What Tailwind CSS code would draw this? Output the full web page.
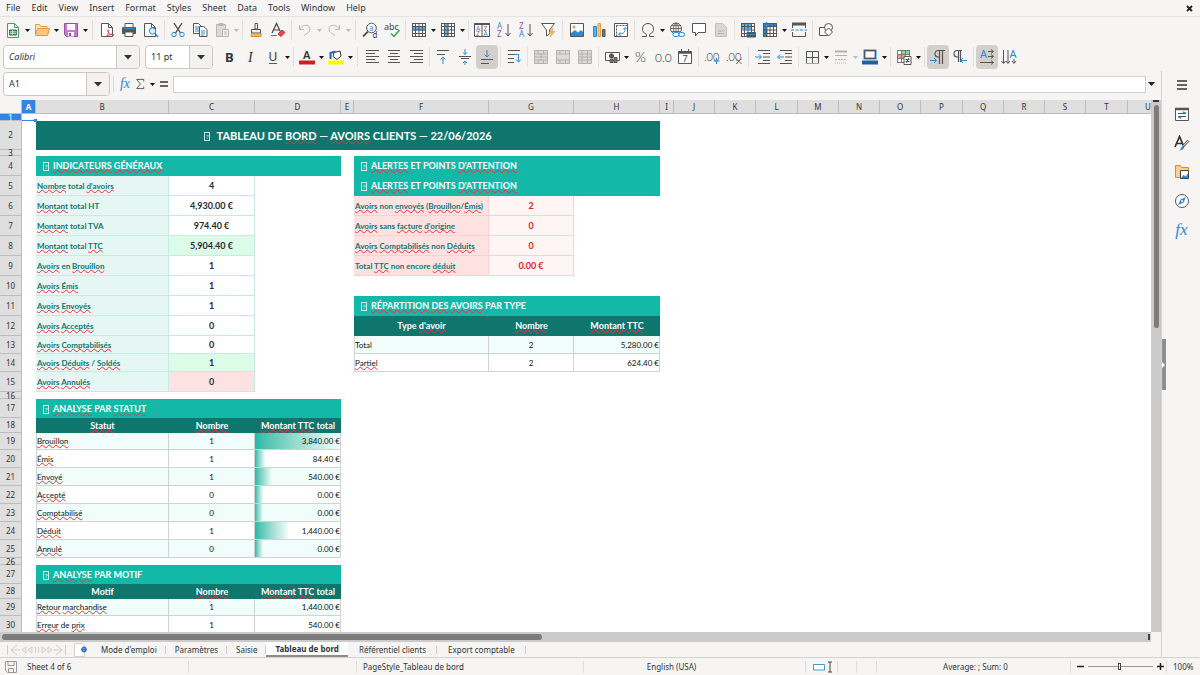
<!DOCTYPE html>
<html lang="fr">
<head>
    <meta charset="UTF-8">
    <meta name="viewport" content="width=device-width, initial-scale=1.0">
    <title>Tableau de bord - Avoirs clients</title>
    <script src="https://cdn.jsdelivr.net/npm/@tailwindcss/browser@4"></script>
</head>
<body class="h-screen flex flex-col overflow-hidden bg-[#f6f5f4] text-[#2e3436] font-['Noto_Sans',sans-serif] text-[9px] leading-3">

    <!-- Menu bar -->
    <nav class="flex items-center h-[17px] shrink-0 pl-[6px] pr-[6px] gap-[11px] border-b border-[#e6e4e2]">
        <button>File</button>
        <button>Edit</button>
        <button>View</button>
        <button>Insert</button>
        <button>Format</button>
        <button>Styles</button>
        <button>Sheet</button>
        <button>Data</button>
        <button>Tools</button>
        <button>Window</button>
        <button>Help</button>
        <button class="ml-auto" aria-label="Close document">
            <svg class="w-[9px] h-[9px]" viewBox="0 0 9 9" stroke="#222" stroke-width="1.8"><path d="M2 2l5 5M7 2l-5 5"/></svg>
        </button>
    </nav>

    <!-- Standard toolbar -->
    <div id="standardBar" class="flex items-center h-[26px] shrink-0 pl-[2px]"></div>

    <!-- Formatting toolbar -->
    <div class="flex items-center h-[28px] shrink-0 pl-[3px]">
        <div class="flex w-[137px] h-[24px] shrink-0 mr-[5px] border border-[#cdc7c2] rounded bg-white overflow-hidden">
            <input aria-label="Font name" value="Calibri" class="flex-1 min-w-0 pl-[5px] italic outline-none">
            <button aria-label="Font list" class="w-[23px] border-l border-[#cdc7c2] bg-[#f3f2f1] flex items-center justify-center">
                <svg class="w-[8px] h-[5px]" viewBox="0 0 8 5"><path d="M0 0h8l-4 4.500z" fill="#2e3436"/></svg>
            </button>
        </div>
        <div class="flex w-[68px] h-[24px] shrink-0 border border-[#cdc7c2] rounded bg-white overflow-hidden">
            <input aria-label="Font size" value="11 pt" class="flex-1 min-w-0 pl-[5px] outline-none">
            <button aria-label="Size list" class="w-[23px] border-l border-[#cdc7c2] bg-[#f3f2f1] flex items-center justify-center">
                <svg class="w-[8px] h-[5px]" viewBox="0 0 8 5"><path d="M0 0h8l-4 4.500z" fill="#2e3436"/></svg>
            </button>
        </div>
        <div id="formatBar" class="flex items-center pl-[5px]"></div>
    </div>

    <div class="flex flex-1 min-h-0">
        <main class="flex flex-col flex-1 min-w-0">
            <!-- Formula bar -->
            <div class="flex items-center h-[26px] shrink-0 mb-[3px] pl-[3px]">
                <div class="flex w-[107px] h-[24px] shrink-0 border border-[#cdc7c2] rounded bg-white overflow-hidden">
                    <input aria-label="Name box" value="A1" class="flex-1 min-w-0 pl-[5px] outline-none">
                    <button aria-label="Named ranges" class="w-[23px] border-l border-[#cdc7c2] bg-[#f3f2f1] flex items-center justify-center">
                        <svg class="w-[8px] h-[5px]" viewBox="0 0 8 5"><path d="M0 0h8l-4 4.500z" fill="#2e3436"/></svg>
                    </button>
                </div>
                <div class="w-px h-4 mx-[3px] bg-[#dcdad8]"></div>
                <button aria-label="Function wizard" class="w-[16px] text-[14px] leading-4 italic text-[#2a8ad4] font-['Liberation_Serif',serif]">fx</button>
                <button aria-label="Select function" class="flex items-center pl-[2px]">
                    <svg class="w-[10px] h-[14px]" viewBox="0 0 12 14" fill="none" stroke="#444"><path d="M10.500 4V1.500H2L6.500 7L2 12.500h8.500V10"/></svg>
                    <svg class="w-[5px] h-[3px] ml-[5px]" viewBox="0 0 5 3"><path d="M0 0h5L2.500 3z" fill="#111"/></svg>
                </button>
                <button aria-label="Formula" class="w-[18px] flex justify-center">
                    <svg class="w-[8px] h-[6px]" viewBox="0 0 8 6" stroke="#333" stroke-width="1.400"><path d="M0 1h8M0 5h8"/></svg>
                </button>
                <input aria-label="Input line" class="flex-1 min-w-0 h-[17px] border border-[#d0d0d0] bg-white outline-none">
                <button aria-label="Expand formula bar" class="w-[15px] flex justify-center">
                    <svg class="w-[7px] h-[4px] mr-[4px]" viewBox="0 0 7 4"><path d="M0 0h7L3.500 4z" fill="#222"/></svg>
                </button>
            </div>

            <!-- Sheet -->
            <div class="flex flex-1 min-h-0">
                <div class="relative flex-1 min-w-0 overflow-hidden bg-white">
                    <table class="table-fixed border-separate border-spacing-0 w-[1168px]">
                        <colgroup id="cols"></colgroup>
                        <thead><tr id="colHeads"></tr></thead>
                        <tbody id="sheet" class="font-[Lato,sans-serif]"></tbody>
                    </table>
                    <!-- Cell cursor on A1 -->
                    <div class="absolute left-[22px] top-[14px] w-[14px] h-[7px] border-b border-[#3584e4]"></div>
                    <div class="absolute left-[34px] top-[19px] w-[3px] h-[3px] bg-[#3584e4]"></div>
                </div>
                <div class="w-[10px] shrink-0 bg-[#cbcbcb] flex flex-col items-center">
                    <div class="w-[6px] h-[2px] mb-[3px] bg-[#333]"></div>
                    <div class="w-[5px] h-[42%] rounded-full bg-[#7c7c7c]"></div>
                </div>
            </div>
            <div class="flex h-[10px] shrink-0 mr-[10px] pl-[2px] items-center bg-[#cbcbcb]">
                <div class="w-[47%] h-[6px] rounded-full bg-[#7c7c7c]"></div>
                <div class="ml-auto mr-px w-[2px] h-[6px] bg-[#444]"></div>
            </div>

            <!-- Sheet tabs -->
            <div class="flex items-stretch h-[15px] shrink-0 text-[8px]">
                <div class="flex items-center w-[92px] pl-[6px] gap-[7px]">
                    <svg class="w-[61px] h-[12px]" viewBox="0 0 61 12" fill="none" stroke="#cfcdcb"><path d="M1.500 1v10M11 1L5 6l6 5M5 6h9M20 3l-4 3 4 3zM26 3l-4 3 4 3zM29.500 3v6M32.500 3v6M36 3l4 3-4 3zM42 3l4 3-4 3zM50 1l6 5-6 5M56 6h-9M59.500 1v10"/></svg>
                    <button aria-label="Add sheet">
                        <svg class="w-[13px] h-[14px]" viewBox="0 0 13 14"><path d="M.5 .5h8l2 2v11H.5z" fill="#fff" stroke="#d5d3d1"/><circle cx="10" cy="6.500" r="2" fill="#fff" stroke="#2a62c4" stroke-width="1.300"/><path d="M10 3.500v6M7 6.500h6" stroke="#2a62c4" stroke-width=".8"/></svg>
                    </button>
                </div>
                <button class="px-[9px] relative after:absolute after:right-0 after:top-1 after:h-2 after:w-px after:bg-[#cfcdcb]">Mode d'emploi</button>
                <button class="px-[9px] relative after:absolute after:right-0 after:top-1 after:h-2 after:w-px after:bg-[#cfcdcb]">Paramètres</button>
                <button class="px-[9px] relative after:absolute after:right-0 after:top-1 after:h-2 after:w-px after:bg-[#cfcdcb]">Saisie</button>
                <button class="px-[9px] bg-white font-bold border-b-2 border-[#8c8c8c]">Tableau de bord</button>
                <button class="px-[11px] relative after:absolute after:right-0 after:top-1 after:h-2 after:w-px after:bg-[#cfcdcb]">Référentiel clients</button>
                <button class="px-[11px] relative after:absolute after:right-0 after:top-1 after:h-2 after:w-px after:bg-[#cfcdcb]">Export comptable</button>
            </div>
        </main>

        <!-- Sidebar -->
        <aside class="w-[39px] shrink-0 border-l border-[#d5d3d1] flex">
            <button aria-label="Hide sidebar" class="w-[4px] h-[51px] mt-[268px] bg-[#8f8f8f] flex items-center">
                <svg class="w-[3px] h-[6px]" viewBox="0 0 3 6"><path d="M0 0l3 3-3 3z" fill="#fff"/></svg>
            </button>
            <div class="flex flex-col items-center flex-1 pt-[6px] pr-[3px] gap-[13px]">
                <button aria-label="Sidebar settings"><svg class="w-4 h-4" viewBox="0 0 16 16" stroke="#333" stroke-width="1.500"><path d="M3 4h10M3 8h10M3 12h10"/></svg></button>
                <button aria-label="Properties"><svg class="w-4 h-4" viewBox="0 0 16 16" fill="none"><path d="M1.500 2.500h13v12h-13z" fill="#fff" stroke="#555"/><path d="M1 3h14" stroke="#555" stroke-width="2.500"/><path d="M4 7.500h8M4 10.500h8" stroke="#555"/><path d="M9 6l3 1.500M7 12l-3-1.500" stroke="#2a8ad4" stroke-width="1.500"/></svg></button>
                <button aria-label="Styles"><svg class="w-4 h-4" viewBox="0 0 16 16" fill="none"><path d="M1 12L5.500 1.500 10 12M2.500 8.500h6" stroke="#333" stroke-width="1.700"/><path d="M14.500 5.500L9.500 11" stroke="#555" stroke-width="2.500"/><path d="M14.500 5.500L9.500 11" stroke="#fff"/><path d="M5 15.500c2 0 1.500-4 4-4.500 2 .5 1.500 4-4 4.500z" fill="#2a8ad4"/></svg></button>
                <button aria-label="Gallery"><svg class="w-4 h-4" viewBox="0 0 16 16" fill="none"><path d="M1.500 13.500v-12h5l1 2h7v10z" fill="#fbd08c" stroke="#e08a2c"/><path d="M6.500 6.500h8v8h-8z" fill="#fff" stroke="#444"/><path d="M7 14l2.500-3 2 1.500 2.500-3V14z" fill="#2a8ad4"/></svg></button>
                <button aria-label="Navigator"><svg class="w-4 h-4" viewBox="0 0 16 16" fill="none"><circle cx="8" cy="8" r="6.500" fill="#fff" stroke="#555"/><path d="M12 4L9.500 9.500 4 12l2.500-5.500z" fill="#2a8ad4"/><circle cx="8" cy="8" r="1" fill="#fff"/></svg></button>
                <button aria-label="Functions" class="h-4 text-[17px] leading-4 italic text-[#2a8ad4] font-['Liberation_Serif',serif]">fx</button>
            </div>
        </aside>
    </div>

    <!-- Status bar -->
    <footer class="grid grid-cols-[189fr_168fr_227fr_222fr_32px_19px_20px_194fr_96px_33px] items-center h-[18px] shrink-0 border-t border-[#d5d3d1] text-[8px] [&>*]:h-3 [&>*]:border-[#e0dedc]">
        <div class="flex items-center pl-[5px] gap-[10px] border-r">
            <svg class="w-3 h-3" viewBox="0 0 12 12" fill="none" stroke="#999"><path d="M.5 .5h11v11h-9l-2-2zM3 .5v4h6v-4M3.500 11.500v-4h5v4"/></svg>
            <span>Sheet 4 of 6</span>
        </div>
        <div class="border-r"></div>
        <div class="pl-[6px] border-r">PageStyle_Tableau de bord</div>
        <div class="pr-[46px] text-center border-r">English (USA)</div>
        <div class="flex items-center justify-center gap-[2px] border-r">
            <svg class="w-[19px] h-3 ml-[2px]" viewBox="0 0 19 12" fill="none"><path d="M.5 3.500h11v5.500H.5z" fill="#fff" stroke="#4a98cf"/><path d="M15 1h4M15 11h4M17 1v10" stroke="#444"/></svg>
        </div>
        <div class="border-r"></div>
        <div class="border-r"></div>
        <div class="pl-[4px] text-center border-r">Average: ; Sum: 0</div>
        <div class="flex items-center pl-[6px] gap-[4px] border-r">
            <button aria-label="Zoom out"><svg class="w-[7px] h-[7px]" viewBox="0 0 7 7" stroke="#222" stroke-width="1.500"><path d="M0 3.500h7"/></svg></button>
            <input type="range" aria-label="Zoom" min="0" max="100" value="49" class="appearance-none w-[65px] h-px bg-[#999] [&::-webkit-slider-thumb]:appearance-none [&::-webkit-slider-thumb]:w-[3px] [&::-webkit-slider-thumb]:h-[7px] [&::-webkit-slider-thumb]:border [&::-webkit-slider-thumb]:border-[#444] [&::-webkit-slider-thumb]:bg-white">
            <button aria-label="Zoom in"><svg class="w-[7px] h-[7px]" viewBox="0 0 7 7" stroke="#222" stroke-width="1.500"><path d="M0 3.500h7M3.500 0v7"/></svg></button>
        </div>
        <div class="pl-[6px]">100%</div>
    </footer>

    <script>
        // Icons are drawn on a 16x16 grid
        const B = '#2a8ad4';
        const text = (x, y, size, fill, s, extra = '') => `<text x="${x}" y="${y}" font-size="${size}" fill="${fill}" stroke="none" ${extra}>${s}</text>`;
        const light = 'font-family="Lato,DejaVu Sans,sans-serif" font-weight="300"';
        const tableGrid = '<path d="M1.500 1.500h13v13h-13z" fill="#fff"/>';
        const gridLines = '<path d="M1.500 1.500h13v13h-13zM1.500 4.500h13M1.500 8h13M1.500 11.500h13M4.500 1.500v13M8 1.500v13M11.500 1.500v13"/>';
        const mergeIcon = extra => `<g stroke="#b5b3b1"><path d="M1.500 1.500h13v13h-13z" fill="#dddbd9"/><path d="M1.500 5h13M1.500 11h13M5 1.500V5M10.500 1.500V5M5 11v3.500M10.500 11v3.500"/>${extra}</g>`;

        const icons = {
            new: '<path d="M2.500 1.500h7l4 4v10h-11z" fill="#fff" stroke="#3da35d"/><path d="M9.500 1.500v4h4" stroke="#3da35d"/><path d="M4.500 8h7v5h-7z" fill="#3da35d"/><path d="M4.500 9.800h7M4.500 11.500h7M7.500 8v5" stroke="#fff" stroke-width=".6"/>',
            open: '<path d="M1.500 13V2.500h4l1.500 2h6v3" fill="#fde3bb" stroke="#e59b3c"/><path d="M1.500 13.500l2-7h12l-2 7z" fill="#fbc97e" stroke="#e59b3c"/>',
            save: '<path d="M1.500 1.500h13v13h-11l-2-2z" fill="#c778cf" stroke="#9f4ba9"/><path d="M4 2h8v6H4zM5 10h6v4.500H5z" fill="#fff" stroke="none"/><path d="M6 11h2v3H6z" fill="#9f4ba9" stroke="none"/>',
            pdf: '<path d="M2.500 1.500h7l4 4v9h-11z" fill="#fff"/><path d="M9.500 1.500v4h4"/><path d="M7 15c3-3 3-8 2-7s1 5 6 5c-2-1.500-5-.5-8 2" stroke="#dc3b4b"/>',
            print: '<path d="M4 5V1.500h8V5" fill="#fff"/><path d="M1.500 5.500h13v6h-13z" fill="#555"/><path d="M2 6.500h12" stroke="#2a8ad4" stroke-width="1.500"/><path d="M4 10h8v4.500H4z" fill="#fff"/>',
            preview: '<path d="M1.500 1.500h7l4 4v9h-11z" fill="#fff"/><path d="M8.500 1.500v4h4"/><circle cx="9.500" cy="9" r="3.200" fill="#d9ecf9" stroke="#2a8ad4"/><path d="M12 11.500l3 3.500" stroke="#2a8ad4" stroke-width="1.500"/>',
            cut: '<path d="M4 1l6.500 10M12 1L5.500 11" stroke="#444" stroke-width="1.300"/><circle cx="4" cy="12.500" r="2.200" stroke="#2a8ad4"/><circle cx="12" cy="12.500" r="2.200" stroke="#2a8ad4"/>',
            copy: '<path d="M1.500 1.500h5l3 3v7h-8z" fill="#fff"/><path d="M3 5h4M3 7h4M3 9h4" stroke="#2a8ad4"/><path d="M7.500 4.500h4l3.500 3v7H7.500z" fill="#fff"/><path d="M9 9h4M9 11h4M9 13h3" stroke="#2a8ad4"/>',
            paste: '<g stroke="#b8b6b4"><path d="M2.500 2.500h9v12h-9z" fill="#dcdad8"/><path d="M5 1.500h4v2H5z" fill="#b8b6b4"/><path d="M8.500 7.500h6v7h-6z" fill="#f2f2f2"/><path d="M10 10h3M10 12h3"/></g>',
            clone: '<path d="M7 1.500h2.500V7H7z" fill="#fff"/><path d="M3.500 7.500h9V11h-9z" fill="#eee"/><path d="M3.500 11.500h9.500v3H3z" fill="#f9b95c" stroke="#e08a2c"/>',
            clear: '<path d="M2 11L6.500 1.500 11 11M4 8h5" stroke="#444" stroke-width="1.200"/><path d="M1 13.500h6" stroke="#2a8ad4"/><path d="M8 12l4-4 3 2.500-4 4z" fill="#e0485a" stroke="#c33"/>',
            undo: '<path d="M2.500 3v4.500H7M2.500 7.500C5 2 13 2 13 7c0 3-3 4.500-6 6.500" stroke="#bbb9b7"/>',
            redo: '<path d="M13.500 3v4.500H9M13.500 7.500C11 2 3 2 3 7c0 3 3 4.500 6 6.500" stroke="#bbb9b7"/>',
            find: '<circle cx="9.500" cy="6" r="4.800" fill="#fff"/><path d="M6 9.500L1 14.500" stroke-width="1.800"/>' + text(7, 8.5, 8, B, 'a') + text(10.5, 15.5, 8, '#444', 'd'),
            spell: text(0, 7.5, 9, '#444', 'abc') + '<path d="M7 11.500l3 3L15.500 8" stroke="#2fa85a" stroke-width="1.500"/>',
            row: tableGrid + '<path d="M1 4.500h14v4H1z" fill="#5fb0ea" stroke="none"/>' + gridLines,
            column: tableGrid + '<path d="M4.500 1h4v14h-4z" fill="#5fb0ea" stroke="none"/>' + gridLines,
            sort: '<path d="M.5 1.500h15v13H.5zM8 2v12" fill="#fff"/><path d="M.5 2h15" stroke-width="2"/>' + text(2, 8.5, 6.5, B, 'A') + text(2, 14, 6.5, '#a347ba', 'Z') + text(9.5, 8.5, 6.5, '#a347ba', 'Z') + text(9.5, 14, 6.5, B, 'A'),
            az: text(1, 7, 8, B, 'A') + text(1, 15, 8, '#a347ba', 'Z') + '<path d="M12 2v12M9.500 11l2.500 3 2.500-3"/>',
            za: text(1, 7, 8, '#a347ba', 'Z') + text(1, 15, 8, B, 'A') + '<path d="M12 2v12M9.500 11l2.500 3 2.500-3"/>',
            filter: '<path d="M1.500 1.500h13L9.500 8v4l-3 2V8z" fill="#fff"/><path d="M13 6l-4 5h3l-2 4 5-5.500h-3z" fill="#f9b95c" stroke="#e59b3c" stroke-width=".6"/>',
            image: '<path d="M1.500 1.500h13v13h-13z" fill="#fff"/><path d="M2 14v-3l4-3 3 2.500L12 8l2 2v4z" fill="#2a8ad4" stroke="none"/><circle cx="5" cy="5" r="1.600" fill="#f9a03c" stroke="none"/>',
            chart: '<path d="M2.500 4.500h3v10h-3z" fill="#5fb0ea" stroke="#2a8ad4"/><path d="M7 1.500h2.500v13H7z" fill="#fbc97e" stroke="#e59b3c"/><path d="M11.500 7.500h2.500v7h-2.500z" fill="#777"/>',
            pivot: '<path d="M1.500 1.500h13v13h-13z" fill="#fff"/><path d="M3.500 3.500h11M3.500 3.500v11" stroke-dasharray="2 1"/><path d="M6 12c5 0 6-2 6-6M10 7.500L12 5.500l2 2M7.500 10.500L5.500 12l2 2" stroke="#2a8ad4"/>',
            omega: '<path d="M2 14.500h4.500v-2C3.500 11 2.500 9 2.500 7c0-3.500 2.500-5.500 5.500-5.500s5.500 2 5.500 5.500c0 2-1 4-4 5.500v2H14"/>',
            link: '<circle cx="7" cy="6.500" r="5.500"/><path d="M1.500 6.500h11M7 1v11M3 3.500h8M3 9.500h8M7 1c-3.500 3-3.500 8 0 11M7 1c3.500 3 3.500 8 0 11" stroke-width=".8"/><rect x="4" y="10.500" width="6" height="4" rx="2" fill="#fff" stroke="#2a8ad4"/><rect x="9.500" y="10.500" width="6" height="4" rx="2" stroke="#2a8ad4"/>',
            comment: '<path d="M1.500 1.500h13v9H7l-2.500 3.500V10.500h-3z" fill="#fff"/>',
            header: '<path d="M2.500 1.500h7l4 4v9h-11z" fill="#dad8d6" stroke="#c2c0be"/><path d="M5 9h6M5 11.500h6" stroke="#b5b3b1"/>',
            printArea: tableGrid + '<path d="M1.500 1.500h10v6h-10z" fill="#5fb0ea" stroke="none"/>' + gridLines + '<path d="M7 10.500h8.500V15H7z" fill="#555"/><path d="M7 12.500h8" stroke="#2a8ad4"/>',
            freeze: tableGrid + '<path d="M1.500 1.500h13v3h-9v10h-4z" fill="#2a8ad4" stroke="none"/>' + gridLines + '<path d="M4.500 0v6" stroke="#2a8ad4" stroke-width="1.500"/>',
            split: '<path d="M1.500 2v4M14.500 2v4M1.500 10v4.500h13V10"/><path d="M1 2h14" stroke-width="3"/><path d="M0 8h16" stroke="#2a8ad4" stroke-dasharray="3 1.500"/>',
            shapes: '<path d="M1.500 5.500h8v8h-8z" fill="#fff"/><circle cx="10.500" cy="5.500" r="4" fill="#f6f5f4"/><path d="M10.500 6l4 4-4 4-4-4z" fill="#fff"/>',
            bold: text(4, 13, 13, '#333', 'B', 'font-weight="700"'),
            italic: text(5, 13, 14, '#333', 'I', 'font-style="italic" font-family="Liberation Serif"'),
            underline: text(3.5, 12, 12, '#333', 'U') + '<path d="M4 14.500h8" stroke="#2a62c4"/>',
            color: text(4, 10, 11, '#333', 'A', 'font-weight="600"') + '<path d="M0 13.500h16" stroke="#c9211e" stroke-width="4"/>',
            highlight: '<path d="M6 3.500l6-1.500 1 5-4 3.500-4-3z" fill="#fff" stroke="#333"/><path d="M2.500 10V4l5-1.500" stroke="#2a62a4" stroke-width="2"/><path d="M0 13.500h16" stroke="#ff0" stroke-width="4"/>',
            left: '<path d="M2 1.500h13M2 4.500h9M2 7.500h13M2 10.500h9M2 13.500h13"/>',
            center: '<path d="M2 1.500h12M4 4.500h8M2 7.500h12M4 10.500h8M2 13.500h12"/>',
            right: '<path d="M2 1.500h13M6 4.500h9M2 7.500h13M6 10.500h9M2 13.500h13"/>',
            top: '<path d="M2 1.500h12M2 5.500h8"/><path d="M8 15V8M5.500 10.500L8 8l2.500 2.500" stroke="#2a8ad4"/>',
            middle: '<path d="M2 7.500h12M4 9.500h8"/><path d="M8 0v5.500M6 3.500l2 2 2-2M8 16v-4M6 14l2-2 2 2" stroke="#2a8ad4"/>',
            bottom: '<path d="M2 10.500h12M2 14.500h8"/><path d="M8 1v7M5.500 5.500L8 8l2.500-2.500" stroke="#2a8ad4"/>',
            wrap: '<path d="M2 1.500h12M2 5.500h6M2 9.500h6M2 13.500h6"/><path d="M8 5.500h4.500v7M10 10.500l2.500 2.500 2.500-2.500" stroke="#2a8ad4"/>',
            merge: mergeIcon('<path d="M8 5v6M1.500 8h13"/>'),
            mergeCells: mergeIcon(''),
            unmerge: mergeIcon('<path d="M5 5v6M10.500 5v6M1.500 8h13"/>'),
            currency: '<path d="M1.500 3.500h14v8h-14z" fill="#fff"/><circle cx="7.500" cy="7" r="2.200" fill="#555"/><path d="M6 13.500h3v-3H6zM10 13.500h3v-5h-3z" fill="#777"/>',
            percent: text(2, 13, 14, '#333', '%', light),
            number: text(0, 12.500, 12, '#333', '0.0', light),
            date: '<path d="M1.500 2.500h13v12h-13z" fill="#fff"/><path d="M1.500 3.500h13" stroke-width="2.500"/><path d="M4.500 0v3M11.500 0v3"/>' + text(5.5, 13, 9, '#444', '7'),
            addDecimal: text(0, 11.500, 11, '#333', '.00', light) + '<path d="M12.500 9v6M9.500 12h6" stroke="#2a8ad4"/>',
            delDecimal: text(0, 11.500, 11, '#333', '.00', light) + '<path d="M10 9.500l5.500 5.500M15.500 9.500L10 15" stroke="#e0343c"/>',
            indent: '<path d="M3 1.500h12M8 4.500h7M8 8h7M8 11.500h7M3 14.500h12"/><path d="M0 8h6M4 5.500L6.500 8 4 10.500" stroke="#2a8ad4"/>',
            outdent: '<path d="M3 1.500h12M8 4.500h7M8 8h7M8 11.500h7M3 14.500h12"/><path d="M1 8h6M3 5.500L.5 8 3 10.500" stroke="#2a8ad4"/>',
            borders: '<path d="M2.500 14.500v-12h12v12M8.500 2.500v12M2.500 8.500h12" fill="none"/><path d="M2 14.500h13" stroke="#e59b3c"/>',
            lineStyle: '<g stroke="#b5b3b1"><path d="M2 2.500h12" stroke-width="2"/><path d="M2 6.500h12"/><path d="M2 10.500h12" stroke-dasharray="2 1"/><path d="M2 14h12" stroke-dasharray="1 1"/></g>',
            borderColor: '<path d="M2.500 1.500h11v8h-11z" fill="#fff" stroke="#2a8ad4" stroke-width="2"/><path d="M2.500 1.500h11v8h-11z"/><path d="M0 13.500h16" stroke="#1e5fa8" stroke-width="4"/>',
            conditional: '<path d="M1.500 1.500h12v12h-12z" fill="#fff"/><path d="M5 1.500h8v4H5z" fill="#8ad79a" stroke="none"/><path d="M1.500 5.500h8v4h-8z" fill="#f29a9a" stroke="none"/><path d="M1.500 1.500h12v12h-12zM1.500 5.500h12M1.500 9.500h12M5.500 1.500v12M9.500 1.500v12" stroke="#777"/><path d="M8 7.500h7v8H8z" fill="#fff"/><path d="M9.500 10.500h4M9.500 12.500h4M12.500 9l-2 5"/>',
            ltrPara: '<path d="M9.500 15V1.500M12.500 15V1.500M15 1.500H8C4 1.500 4 8 8 8h1" stroke-width="1.200"/><path d="M0 11.500h6M4 9l2.500 2.500L4 14" stroke="#2a8ad4"/>',
            rtlPara: '<path d="M6.500 13V1.500M8.500 13V1.500M10 1.500H5C1 1.500 1 8 5 8h1" stroke-width="1.200"/><path d="M9 11.500h6M11 9l-2.500 2.500L11 14" stroke="#2a8ad4"/>',
            ltr: text(1, 9, 11, B, 'A') + '<path d="M9 2.500h5M12 .5l2.500 2-2.500 2M9 7.500h5M12 5.500l2.500 2-2.500 2M1 13.500h13M12 11.500l2.500 2-2.500 2"/>',
            ttb: text(8.5, 9, 11, B, 'A') + '<path d="M2.500 1v13M.5 12l2 2.500 2-2.500M7 1v13M5 12l2 2.500L9 12M13 10v4M11 12l2 2.500 2-2.500"/>'
        };

        // "v" = drop-down arrow, "vd" = disabled arrow, "|" and "||" = separators, trailing "*" = pressed
        const standard = 'new v open v save v || pdf print preview | cut copy paste vd | clone clear | undo vd redo vd || find spell | row v column v | sort az za filter || image chart pivot | omega v link comment header | printArea freeze v split | shapes';
        const format = 'bold italic underline v | color v highlight v || left center right | top middle bottom* | wrap | merge mergeCells unmerge | currency v percent number date | addDecimal delDecimal || indent outdent | borders v lineStyle vd borderColor v | conditional v | ltrPara* rtlPara | ltr* ttb';

        function renderBar(id, list) {
            document.getElementById(id).innerHTML = list.split(' ').map(key => {
                if (key === '|') return '<div class="w-[5px] h-5 flex justify-center"><div class="w-px bg-[#e2e0de]"></div></div>';
                if (key === '||') return '<div class="w-[7px] h-5 flex justify-center"><div class="w-px bg-[#e2e0de]"></div></div>';
                if (key[0] === 'v') {
                    return `<button aria-label="More" class="w-[7px] flex justify-center"><svg class="w-[5px] h-[3px]" viewBox="0 0 5 3"><path d="M0 0h5L2.500 3z" fill="${key === 'vd' ? '#bbb' : '#111'}"/></svg></button>`;
                }
                const pressed = key.endsWith('*');
                const name = key.replace('*', '');
                return `<button aria-label="${name}" class="w-[22px] h-[24px] rounded flex items-center justify-center ${pressed ? 'bg-[#d3d0cc]' : ''}"><svg class="w-4 h-4 overflow-visible" viewBox="0 0 16 16" fill="none" stroke="#555">${icons[name]}</svg></button>`;
            }).join('');
        }

        // Columns
        const widths = [22, 14, 133, 86, 86, 13, 135, 85, 86, 14, 41, 41, 42, 41, 41, 41, 42, 41, 41, 41, 42, 41];
        document.getElementById('cols').innerHTML = widths.map(w => `<col style="width:${w}px">`).join('');
        document.getElementById('colHeads').innerHTML = ' ABCDEFGHIJKLMNOPQRSTU'.split('').map(c =>
            `<th class="h-[14px] p-0 border-r border-b border-[#bdbdbd] text-[8px] leading-3 ${c === 'A' ? 'bg-[#3584e4] text-white font-bold' : c === ' ' ? 'bg-[#f6f5f4] font-normal' : 'bg-[#dfdfdf] font-normal'}">${c}</th>`
        ).join('');

        // Cell styles
        const styles = {
            none: '',
            title: 'bg-[#0f766e] text-white font-bold text-[11px] text-center',
            section: 'bg-[#14b8a6] text-white font-bold text-[9px] pl-[7px]',
            head: 'bg-[#0f766e] text-white font-bold text-[9px] text-center',
            label: 'bg-[#e6f6f3] text-[#0f766e] font-bold text-[8px] pl-px border-r border-b border-[#c4ebe4]',
            value: 'text-[#1f2937] font-bold text-[9px] text-center border-r border-b border-[#c4ebe4]',
            good: 'bg-[#dcfce7] text-[#1f2937] font-bold text-[9px] text-center border-r border-b border-[#c4ebe4]',
            bad: 'bg-[#fee2e2] text-[#1f2937] font-bold text-[9px] text-center border-r border-b border-[#c4ebe4]',
            alert: 'bg-[#fee2e2] text-[#0f766e] font-bold text-[8px] pl-px border-r border-b border-[#fbd0d0]',
            alertValue: 'bg-[#fff5f5] text-[#dc2626] font-bold text-[9px] text-center border-r border-b border-[#fbd0d0]',
            text: 'text-[#111] text-[8px] border-l border-r border-b border-[#cfd4d2]',
            num: 'text-[#111] text-[8px] text-center border-r border-b border-[#cfd4d2]',
            money: 'text-[#111] text-[8px] text-right border-r border-b border-[#cfd4d2]'
        };

        // _word_ marks a word that the spell checker underlines, # stands for the missing glyph
        function markup(s) {
            return s
                .replace('#', '<span class="inline-block w-[6px] h-[9px] mr-[4px] align-middle border border-white/80 text-[6px] leading-[7px] text-center font-normal">?</span>')
                .replace(/_([^_]+)_/g, (m, word) => `<span class="underline decoration-wavy decoration-red-500 decoration-1 [text-decoration-skip-ink:none] [text-underline-offset:0px]">${word}</span>`);
        }

        const gap = n => [n, 'none', ''];
        const kpi = (label, value, style = 'value') => [[1, 'label', label], [1, style, value], gap(1)];
        const line = (label, count, amount, bar) => [[1, 'text', label], [1, 'num', count], [1, 'money', amount, bar]];
        const alertRow = (label, value) => [[1, 'alert', label], [1, 'alertValue', value], gap(1)];
        const empty = [gap(3)];

        // [height, left block (B:D), right block (F:H), tinted block]
        const rows = [
            [7, empty, empty],
            [29, [[7, 'title', '# TABLEAU DE _BORD_ — _AVOIRS_ CLIENTS — 22/06/2026']], null],
            [6, empty, empty],
            [20, [[3, 'section', '#<span>_INDICATEURS_ _GÉNÉRAUX_</span>']], [[3, 'section', '#_ALERTES_ ET POINTS _D\'ATTENTION_']]],
            [20, kpi('_Nombre_ total _d\'avoirs_', '4'), [[3, 'section', '#_ALERTES_ ET POINTS _D\'ATTENTION_']]],
            [20, kpi('_Montant_ total HT', '4,930.00 €'), alertRow('_Avoirs_ non _envoyés_ (_Brouillon_/_Émis_)', '2')],
            [20, kpi('_Montant_ total TVA', '974.40 €'), alertRow('_Avoirs_ sans _facture_ _d\'origine_', '0')],
            [20, kpi('_Montant_ total _TTC_', '5,904.40 €', 'good'), alertRow('_Avoirs_ _Comptabilisés_ non _Déduits_', '0')],
            [20, kpi('_Avoirs_ en _Brouillon_', '1'), alertRow('Total _TTC_ non encore _déduit_', '0.00 €')],
            [20, kpi('_Avoirs_ _Émis_', '1'), empty],
            [20, kpi('_Avoirs_ _Envoyés_', '1'), [[3, 'section', '#_RÉPARTITION_ _DES_ _AVOIRS_ PAR TYPE']]],
            [20, kpi('_Avoirs_ _Acceptés_', '0'), [[1, 'head', 'Type _d\'avoir_'], [1, 'head', '_Nombre_'], [1, 'head', '_Montant_ _TTC_']]],
            [18, kpi('_Avoirs_ _Comptabilisés_', '0'), line('Total', '2', '5,280.00 €'), 'right'],
            [18, kpi('_Avoirs_ _Déduits_ / _Soldés_', '1', 'good'), line('_Partiel_', '2', '624.40 €')],
            [20, kpi('_Avoirs_ _Annulés_', '0', 'bad'), empty],
            [7, empty, empty],
            [19, [[3, 'section', '#_ANALYSE_ PAR _STATUT_']], empty],
            [15, [[1, 'head', '_Statut_'], [1, 'head', '_Nombre_'], [1, 'head', '_Montant_ _TTC_ total']], empty],
            [17, line('_Brouillon_', '1', '3,840.00 €', 84), empty, 'left'],
            [18, line('_Émis_', '1', '84.40 €', 10), empty],
            [18, line('_Envoyé_', '1', '540.00 €', 17), empty, 'left'],
            [18, line('_Accepté_', '0', '0.00 €', 8), empty],
            [18, line('_Comptabilisé_', '0', '0.00 €', 8), empty, 'left'],
            [18, line('_Déduit_', '1', '1,440.00 €', 33), empty],
            [18, line('_Annulé_', '0', '0.00 €', 8), empty, 'left'],
            [7, empty, empty],
            [19, [[3, 'section', '#_ANALYSE_ PAR MOTIF']], empty],
            [15, [[1, 'head', 'Motif'], [1, 'head', '_Nombre_'], [1, 'head', '_Montant_ _TTC_ total']], empty],
            [17, line('_Retour_ _marchandise_', '1', '1,440.00 €'), empty, 'left'],
            [18, line('_Erreur_ de _prix_', '1', '540.00 €'), empty]
        ];

        function cell([span, style, content, bar], tinted) {
            const tint = tinted && ['text', 'num', 'money'].includes(style) ? 'bg-[#f0fdfa]' : '';
            const fill = bar ? 'bg-linear-to-r from-[#20b9a8] to-[#f0fdfa] bg-no-repeat' : '';
            return `<td colspan="${span}" class="p-0 whitespace-nowrap ${styles[style]} ${tint} ${fill}" ${bar ? `style="background-size:${bar}px 100%"` : ''}>${markup(content)}</td>`;
        }

        document.getElementById('sheet').innerHTML = rows.map(([height, left, right, tinted], i) => {
            const head = `<th class="p-0 border-r border-b border-[#bdbdbd] font-normal text-[8px] font-['Noto_Sans',sans-serif] ${i === 0 ? 'bg-[#3584e4] text-white' : 'bg-[#dfdfdf]'}">${i + 1}</th>`;
            const leftCells = left.map(c => cell(c, tinted === 'left')).join('');
            const rightCells = right ? cell(gap(1)) + right.map(c => cell(c, tinted === 'right')).join('') : '';
            return `<tr class="${height < 8 ? 'leading-[5px]' : 'leading-3'}" style="height:${height}px">${head}${cell(gap(1))}${leftCells}${rightCells}${cell(gap(13))}</tr>`;
        }).join('');

        renderBar('standardBar', standard);
        renderBar('formatBar', format);
    </script>
</body>
</html>
